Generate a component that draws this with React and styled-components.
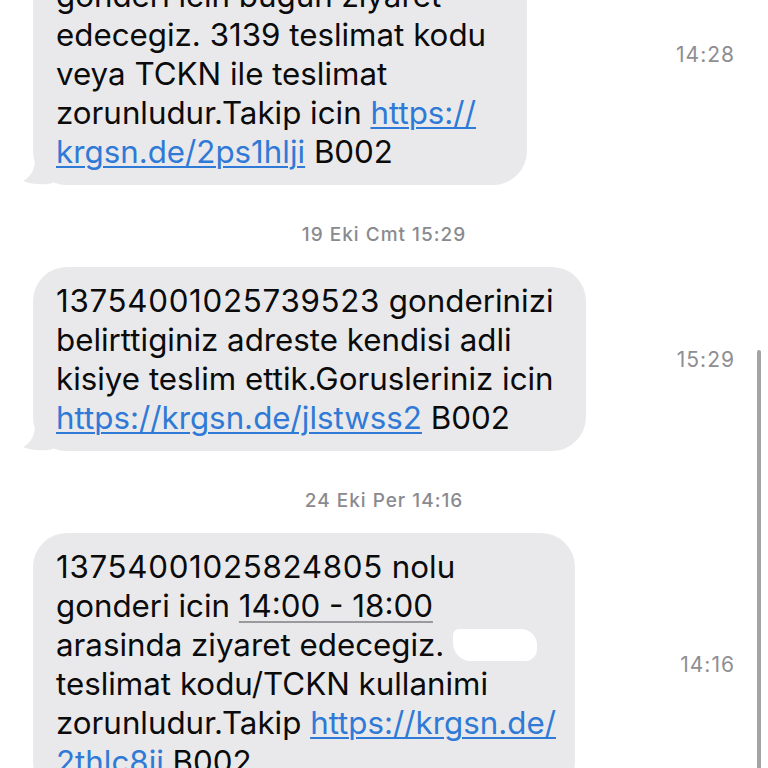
import React from 'react';
import styled, { createGlobalStyle } from 'styled-components';

const GlobalStyle = createGlobalStyle`
    html, body {
        margin: 0;
        padding: 0;
        background: #ffffff;
        overflow: hidden;
    }
    body {
        font-family: Inter, "Noto Sans", "Liberation Sans", sans-serif;
        -webkit-font-smoothing: antialiased;
    }
`;

const messages = [
    {
        id: 1,
        time: '14:28',
        width: 494,
        lines: [
            ['13754001025731187 nolu'],
            ['gonderi icin bugun ziyaret'],
            ['edecegiz. 3139 teslimat kodu'],
            ['veya TCKN ile teslimat'],
            ['zorunludur.Takip icin ', { link: 'https://' }],
            [{ link: 'krgsn.de/2ps1hlji' }, ' B002'],
        ],
    },
    {
        id: 2,
        header: '19 Eki Cmt 15:29',
        time: '15:29',
        width: 553,
        lines: [
            [{ digits: '13754001025739523' }, ' gonderinizi'],
            ['belirttiginiz adreste kendisi adli'],
            ['kisiye teslim ettik.Gorusleriniz icin'],
            [{ link: 'https://krgsn.de/jlstwss2' }, ' B002'],
        ],
    },
    {
        id: 3,
        header: '24 Eki Per 14:16',
        time: '14:16',
        width: 542,
        lines: [
            [{ digits: '13754001025824805' }, ' nolu'],
            ['gonderi icin ', { date: '14:00 - 18:00' }],
            ['arasinda ziyaret edecegiz. ', { redacted: true }],
            ['teslimat kodu/TCKN kullanimi'],
            ['zorunludur.Takip ', { link: 'https://krgsn.de/' }],
            [{ link: '2thlc8ii' }, ' B002'],
        ],
    },
];

function Tail() {
    return (
        <StTail width="30" height="26" viewBox="0 0 30 26">
            <path d="M30 0 L30 24 C22 26 10 26 0 22 C8 18 12 10 12 0 Z" fill="#e9e9eb" />
        </StTail>
    );
}

function renderPart(part, i) {
    if (typeof part === 'string') return <React.Fragment key={i}>{part}</React.Fragment>;
    if (part.link) return <StLink key={i}>{part.link}</StLink>;
    if (part.digits) return <StDigits key={i}>{part.digits}</StDigits>;
    if (part.date) return <StDate key={i}>{part.date}</StDate>;
    if (part.redacted) return <StRedacted key={i} />;
    return null;
}

function App() {
    return (
        <>
            <GlobalStyle />
            <StScreen>
                <StThread>
                    {messages.map((msg) => (
                        <React.Fragment key={msg.id}>
                            {msg.header && <StHeader>{msg.header}</StHeader>}
                            <StRow>
                                <StBubble $width={msg.width}>
                                    {msg.lines.map((line, li) => (
                                        <StLine key={li}>{line.map(renderPart)}</StLine>
                                    ))}
                                    <Tail />
                                </StBubble>
                                <StTime>{msg.time}</StTime>
                            </StRow>
                        </React.Fragment>
                    ))}
                </StThread>
                <StScrollbar />
            </StScreen>
        </>
    );
}

export default App;

const StScreen = styled.div`
    position: relative;
    width: 768px;
    height: 768px;
    overflow: hidden;
    background: #ffffff;
`;

const StThread = styled.div`
    display: flex;
    flex-direction: column;
    margin-top: -77px;
`;

const StHeader = styled.div`
    margin: 39px 0 21px;
    text-align: center;
    font-size: 19px;
    line-height: 22px;
    letter-spacing: 1px;
    font-weight: 500;
    color: #8a8a8e;
`;

const StRow = styled.div`
    display: flex;
    flex-direction: row;
    align-items: center;
    justify-content: space-between;
    padding: 0 33px 0 33px;
`;

const StBubble = styled.div`
    position: relative;
    box-sizing: border-box;
    width: ${(p) => p.$width}px;
    padding: 15px 0 13px 23px;
    border-radius: 34px;
    background: #e9e9eb;
    color: #0b0b0b;
    font-size: 31.3px;
    line-height: 39px;
`;

const StLine = styled.div`
    white-space: nowrap;
`;

const StDigits = styled.span`
    letter-spacing: 0.7px;
`;

const StLink = styled.span`
    color: #2f7ad6;
    text-decoration: underline;
    text-decoration-thickness: 1.5px;
    text-underline-offset: 3px;
`;

const StDate = styled.span`
    text-decoration: underline;
    text-decoration-color: #9a9a9e;
    text-decoration-thickness: 1.5px;
    text-underline-offset: 4px;
`;

const StRedacted = styled.span`
    display: inline-block;
    width: 84px;
    height: 32px;
    margin-left: 0;
    vertical-align: -5px;
    background: #ffffff;
    border-radius: 6px 16px 12px 18px;
`;

const StTail = styled.svg`
    position: absolute;
    left: -10px;
    bottom: 0;
`;

const StTime = styled.div`
    font-size: 21px;
    letter-spacing: 1px;
    color: #8e8e93;
`;

const StScrollbar = styled.div`
    position: absolute;
    top: 350px;
    right: 7px;
    width: 4px;
    height: 440px;
    border-radius: 2px;
    background: #a4a4a6;
`;
